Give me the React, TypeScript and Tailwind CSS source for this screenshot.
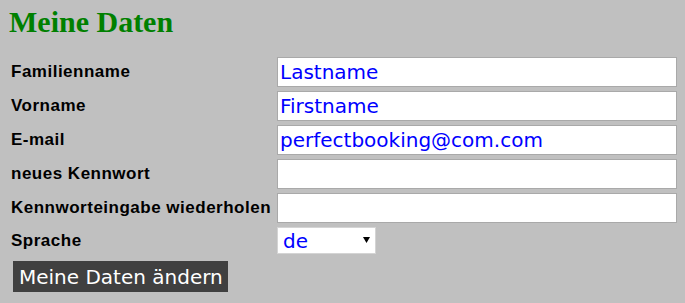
import React from "react";

const rows: { label: string; value: string }[] = [
  { label: "Familienname", value: "Lastname" },
  { label: "Vorname", value: "Firstname" },
  { label: "E-mail", value: "perfectbooking@com.com" },
  { label: "neues Kennwort", value: "" },
  { label: "Kennworteingabe wiederholen", value: "" },
];

export default function App() {
  return (
    <div className="w-[685px] h-[303px] bg-[#c0c0c0] px-[9px] overflow-hidden">
      <h1 className="pt-[5px] text-[30px] leading-[34px] font-bold text-[#008000] [font-family:'Liberation_Serif',serif]">
        Meine Daten
      </h1>
      <div className="mt-[18px] ml-[2px] grid grid-cols-[266px_400px] gap-y-[4px] items-center">
        {rows.map((r) => (
          <React.Fragment key={r.label}>
            <div className="text-[17px] leading-[18px] font-bold tracking-[0.5px] text-black [font-family:'Liberation_Sans',Arial,sans-serif]">
              {r.label}
            </div>
            <input
              readOnly
              value={r.value}
              className="h-[30px] w-[400px] bg-white border border-[#a9a9a9] pl-[2px] pr-[3px] text-[20px] text-[#0000ff] outline-none [font-family:'DejaVu_Sans',sans-serif]"
            />
          </React.Fragment>
        ))}
        <div className="text-[17px] leading-[18px] font-bold tracking-[0.5px] text-black [font-family:'Liberation_Sans',Arial,sans-serif]">
          Sprache
        </div>
        <div className="h-[27px] w-[99px] bg-white border border-[#d4d4d4] flex items-center justify-between pl-[5px] pr-[5px]">
          <span className="text-[20px] leading-[24px] text-[#0000ff] [font-family:'DejaVu_Sans',sans-serif]">de</span>
          <svg width="7" height="6" viewBox="0 0 7 6" className="mb-[1px]">
            <path d="M0 0 L7 0 L3.5 6 Z" fill="#000" />
          </svg>
        </div>
      </div>
      <button className="mt-[7px] ml-[4px] h-[31px] w-[215px] bg-[#404040] text-white text-left pl-[6px] text-[20px] leading-[24px] [font-family:'DejaVu_Sans',sans-serif]">
        Meine Daten ändern
      </button>
    </div>
  );
}
